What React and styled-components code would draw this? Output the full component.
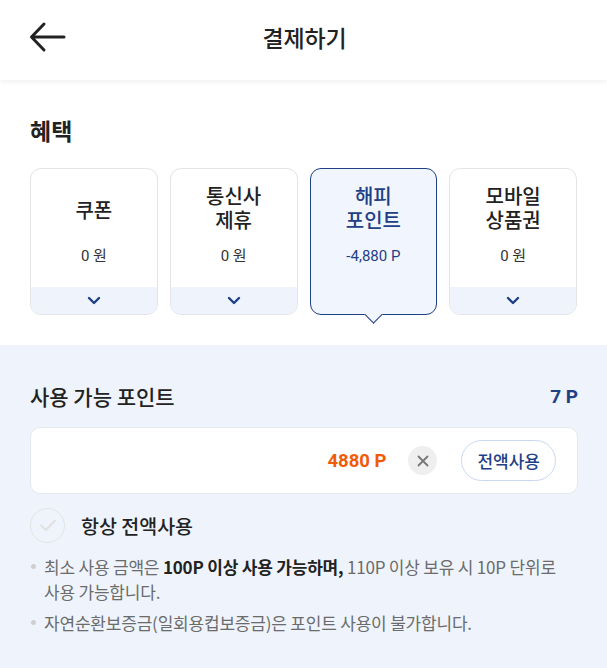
import React from "react";
import styled, { createGlobalStyle, css } from "styled-components";

const GlobalStyle = createGlobalStyle`
  html, body { margin: 0; padding: 0; background: #ffffff; }
  body {
    font-family: "Roboto", "Noto Sans CJK KR", sans-serif;
    color: #222222;
    -webkit-font-smoothing: antialiased;
  }
  * { box-sizing: border-box; }
`;

const NAVY = "#1f3f86";
const ORANGE = "#f15a07";
const TINT = "#eff4fc";

const Page = styled.div`
  min-height: 100vh;
  display: flex;
  flex-direction: column;
  background: ${TINT};
`;

const Header = styled.header`
  height: 80px;
  display: grid;
  grid-template-columns: 1fr auto 1fr;
  align-items: center;
  padding: 0 26px 6px 28px;
  background: #fff;
  box-shadow: 0 2px 5px rgba(0, 0, 0, 0.06);
  position: relative;
  z-index: 1;
`;

const BackButton = styled.button`
  justify-self: start;
  border: 0;
  background: none;
  padding: 0;
  width: 44px;
  height: 40px;
  display: flex;
  align-items: center;
  cursor: pointer;
  color: #222;
`;

const Title = styled.h1`
  margin: 0;
  font-size: 23px;
  font-weight: 500;
  letter-spacing: -0.2px;
  color: #222;
  font-family: "Noto Sans CJK KR", sans-serif;
`;

const Benefits = styled.section`
  background: #fff;
  padding: 33px 30px 30px;
`;

const SectionTitle = styled.h2`
  margin: 0 0 21px;
  font-size: 23px;
  line-height: 34px;
  font-weight: 700;
  color: #222;
  font-family: "Noto Sans CJK KR", sans-serif;
`;

const CardGrid = styled.div`
  display: grid;
  grid-template-columns: repeat(4, 1fr);
  gap: 12px;
`;

const Card = styled.div`
  position: relative;
  height: 147px;
  border-radius: 11px;
  border: 1px solid #e2e4e8;
  background: #fff;
  display: flex;
  flex-direction: column;
  ${(p) =>
    p.$active &&
    css`
      border: 1.5px solid ${NAVY};
      background: #f1f5fd;
      &::after {
        content: "";
        position: absolute;
        left: 50%;
        bottom: -6.5px;
        width: 12px;
        height: 12px;
        margin-left: -6px;
        background: #f1f5fd;
        border-right: 1.5px solid ${NAVY};
        border-bottom: 1.5px solid ${NAVY};
        transform: rotate(45deg);
      }
    `}
`;

const CardBody = styled.div`
  flex: 1;
  display: flex;
  flex-direction: column;
  align-items: center;
  padding-top: 15px;
`;

const CardName = styled.div`
  height: 48px;
  display: flex;
  align-items: center;
  justify-content: center;
  text-align: center;
  font-size: 20px;
  line-height: 24px;
  font-weight: 500;
  color: ${(p) => (p.$active ? NAVY : "#222")};
  font-family: "Noto Sans CJK KR", sans-serif;
  padding-top: ${(p) => (p.$single ? "4px" : "0")};
`;

const CardValue = styled.div`
  margin-top: 14px;
  font-size: 15px;
  line-height: 20px;
  color: ${(p) => (p.$active ? NAVY : "#333")};
`;

const CardStrip = styled.div`
  height: 27px;
  background: #eef3fc;
  border-radius: 0 0 10px 10px;
  display: flex;
  align-items: center;
  justify-content: center;
  color: ${NAVY};
`;

const Points = styled.section`
  flex: 1;
  background: ${TINT};
  padding: 36px 29px 30px 30px;
`;

const PointsHead = styled.div`
  display: flex;
  justify-content: space-between;
  align-items: center;
  height: 30px;
`;

const PointsLabel = styled.div`
  font-size: 21px;
  font-weight: 500;
  color: #222;
  font-family: "Noto Sans CJK KR", sans-serif;
`;

const PointsValue = styled.div`
  font-size: 19px;
  font-weight: 700;
  color: ${NAVY};
`;

const InputBox = styled.div`
  margin-top: 16px;
  height: 67px;
  border-radius: 10px;
  background: #fff;
  border: 1px solid #e4e8ef;
  display: flex;
  align-items: center;
  justify-content: flex-end;
  padding: 0 21px 0 16px;
`;

const Amount = styled.div`
  font-size: 18.5px;
  font-weight: 700;
  color: ${ORANGE};
  margin-right: 22px;
`;

const ClearButton = styled.button`
  width: 29px;
  height: 29px;
  border-radius: 50%;
  border: 0;
  padding: 0;
  background: #efefef;
  display: flex;
  align-items: center;
  justify-content: center;
  color: #777;
  margin-right: 24px;
`;

const FullButton = styled.button`
  height: 41px;
  padding: 0 15px;
  border-radius: 21px;
  border: 1px solid #c9d8f2;
  background: #fff;
  color: ${NAVY};
  font-family: "Noto Sans CJK KR", sans-serif;
  font-size: 17px;
  font-weight: 500;
`;

const CheckRow = styled.label`
  margin-top: 13px;
  display: flex;
  align-items: center;
  gap: 16px;
  height: 36px;
`;

const CheckCircle = styled.span`
  width: 35px;
  height: 35px;
  border-radius: 50%;
  border: 1.5px solid #e3e3e3;
  background: transparent;
  display: flex;
  align-items: center;
  justify-content: center;
`;

const CheckLabel = styled.span`
  font-size: 19.5px;
  font-weight: 500;
  color: #222;
  font-family: "Noto Sans CJK KR", sans-serif;
`;

const Notes = styled.ul`
  list-style: none;
  margin: 11px 0 0;
  padding: 0;
  display: flex;
  flex-direction: column;
  gap: 6px;
`;

const Note = styled.li`
  position: relative;
  padding-left: 14px;
  padding-right: 8px;
  font-size: 17px;
  line-height: 25px;
  color: #6b6b6b;
  font-family: "Noto Sans CJK KR", sans-serif;
  letter-spacing: -0.2px;
  &::before {
    content: "";
    position: absolute;
    left: 1px;
    top: 10px;
    width: 5px;
    height: 5px;
    border-radius: 50%;
    background: #cfcfcf;
  }
  b {
    font-weight: 700;
    color: #222;
  }
`;

const Chevron = () => (
  <svg width="14" height="9" viewBox="0 0 14 9" fill="none">
    <path d="M2 2l5 5 5-5" stroke="currentColor" strokeWidth="2.4" strokeLinecap="round" strokeLinejoin="round" />
  </svg>
);

const cards = [
  { name: ["쿠폰"], value: "0 원" },
  { name: ["통신사", "제휴"], value: "0 원" },
  { name: ["해피", "포인트"], value: "-4,880 P", active: true },
  { name: ["모바일", "상품권"], value: "0 원" },
];

export default function App() {
  return (
    <>
      <GlobalStyle />
      <Page>
        <Header>
          <BackButton aria-label="뒤로">
            <svg width="38" height="32" viewBox="0 0 38 32" fill="none">
              <path d="M36 16H4M16 3L3.5 16 16 29" stroke="#222" strokeWidth="3" strokeLinecap="round" strokeLinejoin="round" />
            </svg>
          </BackButton>
          <Title>결제하기</Title>
          <span />
        </Header>

        <Benefits>
          <SectionTitle>혜택</SectionTitle>
          <CardGrid>
            {cards.map((c) => (
              <Card key={c.value + c.name[0]} $active={c.active}>
                <CardBody>
                  <CardName $active={c.active} $single={c.name.length === 1}>
                    {c.name.map((line, i) => (
                      <React.Fragment key={line}>
                        {i > 0 && <br />}
                        {line}
                      </React.Fragment>
                    ))}
                  </CardName>
                  <CardValue $active={c.active}>{c.value}</CardValue>
                </CardBody>
                {!c.active && (
                  <CardStrip>
                    <Chevron />
                  </CardStrip>
                )}
              </Card>
            ))}
          </CardGrid>
        </Benefits>

        <Points>
          <PointsHead>
            <PointsLabel>사용 가능 포인트</PointsLabel>
            <PointsValue>7 P</PointsValue>
          </PointsHead>
          <InputBox>
            <Amount>4880 P</Amount>
            <ClearButton aria-label="지우기">
              <svg width="12" height="12" viewBox="0 0 12 12" fill="none">
                <path d="M1.5 1.5l9 9M10.5 1.5l-9 9" stroke="#777" strokeWidth="1.8" strokeLinecap="round" />
              </svg>
            </ClearButton>
            <FullButton>전액사용</FullButton>
          </InputBox>
          <CheckRow>
            <CheckCircle>
              <svg width="18" height="14" viewBox="0 0 18 14" fill="none">
                <path d="M2 7.5l5 4.5L16 2.5" stroke="#e0e0e0" strokeWidth="2" strokeLinecap="round" strokeLinejoin="round" />
              </svg>
            </CheckCircle>
            <CheckLabel>항상 전액사용</CheckLabel>
          </CheckRow>
          <Notes>
            <Note>
              최소 사용 금액은 <b>100P 이상 사용 가능하며,</b> 110P 이상 보유 시 10P 단위로 사용 가능합니다.
            </Note>
            <Note>자연순환보증금(일회용컵보증금)은 포인트 사용이 불가합니다.</Note>
          </Notes>
        </Points>
      </Page>
    </>
  );
}
